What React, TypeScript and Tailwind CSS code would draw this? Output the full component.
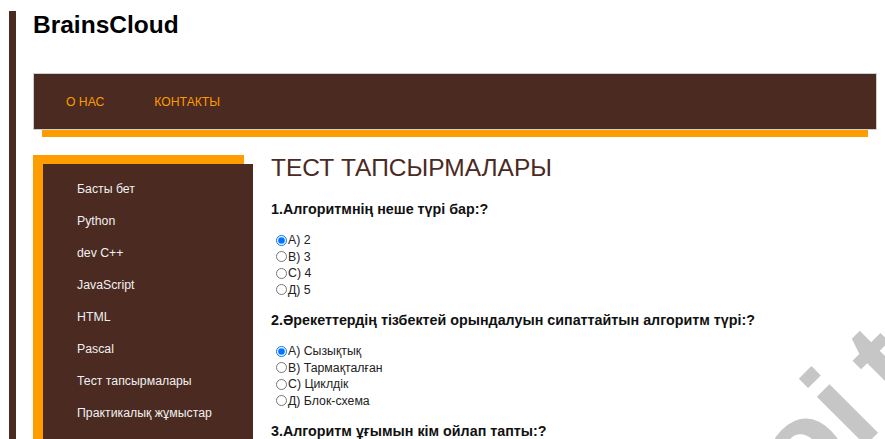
import React from 'react';

const menu = [
  'Басты бет',
  'Python',
  'dev C++',
  'JavaScript',
  'HTML',
  'Pascal',
  'Тест тапсырмалары',
  'Практикалық жұмыстар',
];

const questions = [
  {
    title: '1.Алгоритмнің неше түрі бар:?',
    options: ['А) 2', 'В) 3', 'С) 4', 'Д) 5'],
  },
  {
    title: '2.Әрекеттердің тізбектей орындалуын сипаттайтын алгоритм түрі:?',
    options: ['А) Сызықтық', 'В) Тармақталған', 'С) Циклдік', 'Д) Блок-схема'],
  },
  {
    title: '3.Алгоритм ұғымын кім ойлап тапты:?',
    options: ['А) Әл-Хорезми', 'В) Евклид', 'С) Паскаль', 'Д) Ньютон'],
  },
];

const App: React.FC = () => {
  return (
    <div className="relative h-[439px] overflow-hidden bg-white font-['Liberation_Sans',Arial,sans-serif]">
      <div className="ml-[9px] mt-[11px] min-h-[700px] border-l-[7px] border-[#4a2a21] pl-[17px] pr-[8px]">
        <h1 className="text-[24.5px] font-bold leading-[28px] text-black">BrainsCloud</h1>

        <nav className="mt-[34px] flex h-[57px] items-center border border-[#cfcfcf] bg-[#4a2a21] pl-[32px] pt-[1px] text-[12.2px] text-[#ff9a00]">
          <a href="#">О НАС</a>
          <a href="#" className="ml-[50px]">КОНТАКТЫ</a>
        </nav>
        <div className="mx-[9px] h-[7px] bg-[#ff9c00]" />

        <div className="mt-[18px] flex items-start">
          <aside className="w-[211px] shrink-0 bg-[#ff9c00] pl-[10px] pt-[9px]">
            <ul className="min-h-[420px] w-[210px] bg-[#4a2a21] pl-[34px] pt-[9px] text-[12.3px] text-[#f0f0f0]">
              {menu.map((item) => (
                <li key={item} className="flex h-8 items-center">
                  <a href="#">{item}</a>
                </li>
              ))}
            </ul>
          </aside>

          <main className="ml-[27px] flex-1">
            <h2 className="text-[24.5px] leading-[26px] text-[#4a2a21]">ТЕСТ ТАПСЫРМАЛАРЫ</h2>
            <div className="mt-[20px]">
              {questions.map((q, qi) => (
                <div key={qi} className="mb-[14px]">
                  <p className="text-[14.3px] font-bold leading-[16px] text-[#111]">{q.title}</p>
                  <div className="mt-[15px]">
                    {q.options.map((opt, oi) => (
                      <label key={opt} className="flex h-[16.5px] items-center text-[12.3px] text-[#222]">
                        <input
                          type="radio"
                          name={`q${qi}`}
                          defaultChecked={oi === 0 && qi < 2}
                          className="m-0 ml-[5px] mr-[1px] h-[11px] w-[11px]"
                        />
                        {opt}
                      </label>
                    ))}
                  </div>
                </div>
              ))}
            </div>
          </main>
        </div>
      </div>

      {/* watermark in the lower right corner */}
      <span className="pointer-events-none absolute left-[725px] top-[430px] origin-top-left -rotate-45 whitespace-nowrap text-[130px] font-bold leading-none text-[#c6c6c6]">
        oi<span className="ml-[22px]">t</span>
      </span>
    </div>
  );
};

export default App;
